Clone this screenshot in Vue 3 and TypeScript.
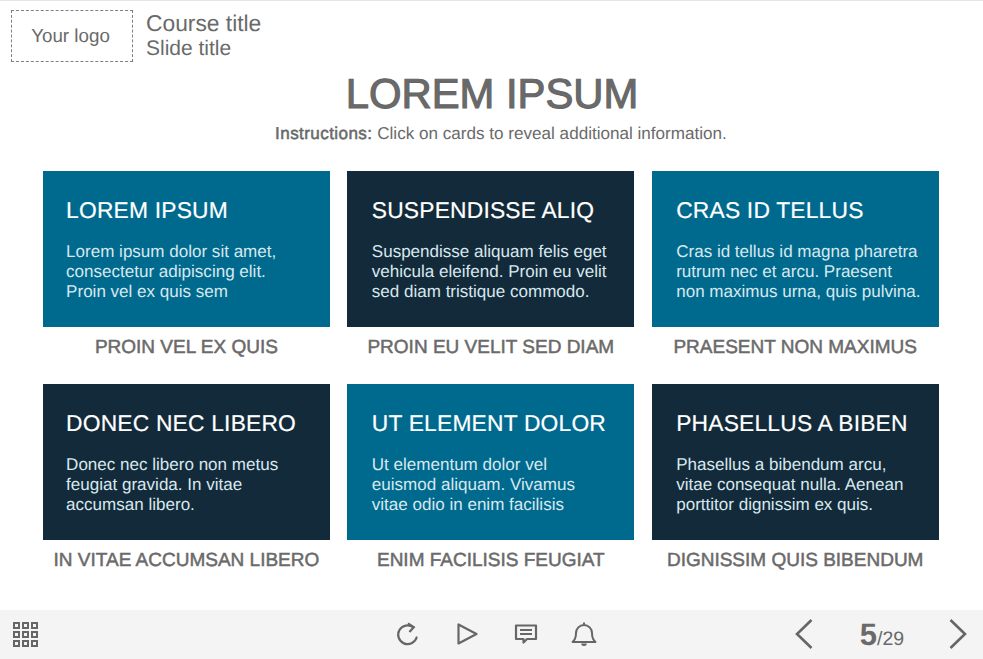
<script setup lang="ts">
interface Card { title: string; lines: string[]; caption: string; dark: boolean }
const cards: Card[] = [
  { title: 'LOREM IPSUM', lines: ['Lorem ipsum dolor sit amet,', 'consectetur adipiscing elit.', 'Proin vel ex quis sem'], caption: 'PROIN VEL EX QUIS', dark: false },
  { title: 'SUSPENDISSE ALIQ', lines: ['Suspendisse aliquam felis eget', 'vehicula eleifend. Proin eu velit', 'sed diam tristique commodo.'], caption: 'PROIN EU VELIT SED DIAM', dark: true },
  { title: 'CRAS ID TELLUS', lines: ['Cras id tellus id magna pharetra', 'rutrum nec et arcu. Praesent', 'non maximus urna, quis pulvina.'], caption: 'PRAESENT NON MAXIMUS', dark: false },
  { title: 'DONEC NEC LIBERO', lines: ['Donec nec libero non metus', 'feugiat gravida. In vitae', 'accumsan libero.'], caption: 'IN VITAE ACCUMSAN LIBERO', dark: true },
  { title: 'UT ELEMENT DOLOR', lines: ['Ut elementum dolor vel', 'euismod aliquam. Vivamus', 'vitae odio in enim facilisis'], caption: 'ENIM FACILISIS FEUGIAT', dark: false },
  { title: 'PHASELLUS A BIBEN', lines: ['Phasellus a bibendum arcu,', 'vitae consequat nulla. Aenean', 'porttitor dignissim ex quis.'], caption: 'DIGNISSIM QUIS BIBENDUM', dark: true },
]
const dots = Array.from({ length: 9 }, (_, i) => i)
</script>

<template>
  <div class="page">
    <header class="top">
      <div class="logo">Your logo</div>
      <div class="titles">
        <div class="course">Course title</div>
        <div class="slide">Slide title</div>
      </div>
    </header>

    <main class="main">
      <h1 class="heading">LOREM IPSUM</h1>
      <p class="instructions"><span class="strong">Instructions:</span> Click on cards to reveal additional information.</p>
      <div class="grid">
        <div v-for="card in cards" :key="card.title" class="item">
          <div class="card" :class="{ dark: card.dark }">
            <div class="card-title">{{ card.title }}</div>
            <div class="card-text">
              <div v-for="line in card.lines" :key="line">{{ line }}</div>
            </div>
          </div>
          <div class="caption">{{ card.caption }}</div>
        </div>
      </div>
    </main>

    <footer class="bar">
      <div class="apps">
        <span v-for="d in dots" :key="d" class="dot"></span>
      </div>
      <div class="tools">
        <svg width="26" height="26" viewBox="0 0 26 26" fill="none" stroke="#666" stroke-width="2.2">
          <path d="M18.2 6.2A9.4 9.4 0 1 0 21.6 16.5" stroke-linecap="round" />
          <path d="M13 2.4 18.8 6.2 14.4 11" stroke-linejoin="miter" />
        </svg>
        <svg width="26" height="26" viewBox="0 0 26 26" fill="none" stroke="#666" stroke-width="2.2" stroke-linejoin="round">
          <path d="M4.5 3.5V22.5L22.5 13Z" />
        </svg>
        <svg width="26" height="26" viewBox="0 0 26 26" fill="none" stroke="#666" stroke-width="2.2" stroke-linejoin="round">
          <path d="M3 4.5H23V18H14L10.5 21.5V18H3Z" />
          <path d="M7 9H19M7 13H19" />
        </svg>
        <svg class="bell" width="26" height="26" viewBox="0 0 26 26" fill="none" stroke="#666" stroke-width="2" stroke-linejoin="round">
          <path d="M1.5 21H24.5C22 19 21 17 21 12A8 8 0 0 0 5 12C5 17 4 19 1.5 21Z" />
          <path d="M13 1.5V4" />
          <path d="M10.2 22.5A2.8 2.5 0 0 0 15.8 22.5Z" fill="#666" stroke="none" />
        </svg>
      </div>
      <div class="pager">
        <svg class="chev" width="20" height="32" viewBox="0 0 20 32" fill="none" stroke="#666" stroke-width="2.6">
          <path d="M17.5 2 3 16 17.5 30" />
        </svg>
        <div class="count"><b>5</b>/29</div>
        <svg class="chev" width="20" height="32" viewBox="0 0 20 32" fill="none" stroke="#666" stroke-width="2.6">
          <path d="M2.5 2 17 16 2.5 30" />
        </svg>
      </div>
    </footer>
  </div>
</template>

<style scoped>
.page {
  width: 983px;
  height: 659px;
  display: flex;
  flex-direction: column;
  background: #fff;
  font-family: "Liberation Sans", Arial, sans-serif;
  color: #6a6a6a;
  border-top: 1px solid #e6e6e6;
  box-sizing: border-box;
  overflow: hidden;
  text-rendering: geometricPrecision;
}
.top {
  display: flex;
  align-items: flex-start;
  gap: 13px;
  padding: 9px 0 0 11px;
  height: 52px;
  box-sizing: content-box;
}
.logo {
  width: 122px;
  height: 52px;
  box-sizing: border-box;
  border: 1px dashed #808080;
  padding: 0 3px 0 0;
  display: flex;
  align-items: center;
  justify-content: center;
  font-size: 18.8px;
}
.titles {
  font-size: 22.8px;
  line-height: 25px;
  padding-top: 1px;
}
.slide { font-size: 21px; line-height: 25px; }
.main {
  flex: 1;
  display: flex;
  flex-direction: column;
  align-items: center;
}
.heading {
  margin: 7px 0 0 1px;
  font-size: 41.8px;
  line-height: 50px;
  font-weight: 400;
  -webkit-text-stroke: 1.1px #666;
}
.instructions {
  margin: 5px 0 0 19px;
  font-size: 17.1px;
  line-height: 20px;
}
.strong {
  letter-spacing: 0.4px;
  -webkit-text-stroke: 0.5px #666;
}
.grid {
  display: grid;
  grid-template-columns: repeat(3, 287px);
  column-gap: 17.4px;
  row-gap: 12px;
  margin-top: 27px;
  margin-left: -1.4px;
}
.card {
  height: 156px;
  box-sizing: border-box;
  padding: 26px 0 0 24.5px;
  background: #006a8e;
  color: #fff;
}
.item:nth-child(3n + 1) .card { padding-left: 23.2px; }
.card.dark { background: #132a3a; }
.card-title {
  font-size: 22.8px;
  line-height: 27px;
  letter-spacing: 0.2px;
  white-space: nowrap;
  -webkit-text-stroke: 0.2px #fff;
}
.card-text {
  margin-top: 18px;
  font-size: 17.05px;
  line-height: 19.8px;
  white-space: nowrap;
  color: #d8e8ee;
}
.caption {
  height: 45px;
  line-height: 42.6px;
  text-align: center;
  font-size: 19px;
  font-weight: 400;
  white-space: nowrap;
  -webkit-text-stroke: 0.5px #6a6a6a;
}
.bar {
  height: 49px;
  background: #f4f4f4;
  position: relative;
  display: flex;
  align-items: center;
  justify-content: center;
  flex-shrink: 0;
}
.apps {
  position: absolute;
  left: 13px;
  top: 12px;
  display: grid;
  grid-template-columns: repeat(3, 7px);
  gap: 2px;
}
.dot {
  width: 7px;
  height: 7px;
  box-sizing: border-box;
  border: 2px solid #666;
}
.tools {
  display: flex;
  gap: 33px;
  align-items: center;
  margin-left: 8.5px;
  margin-top: -2px;
}
.bell { margin-left: -1.5px; }
.pager {
  position: absolute;
  right: 15px;
  top: 9px;
  display: flex;
  align-items: center;
}
.chev {
  align-self: flex-start;
  margin-top: -1px;
}
.count {
  width: 132px;
  padding-left: 2px;
  text-align: center;
  font-size: 19.5px;
  line-height: 32px;
}
.count b { font-size: 31px; }
</style>

<style>
html, body { margin: 0; background: #fff; }
</style>
